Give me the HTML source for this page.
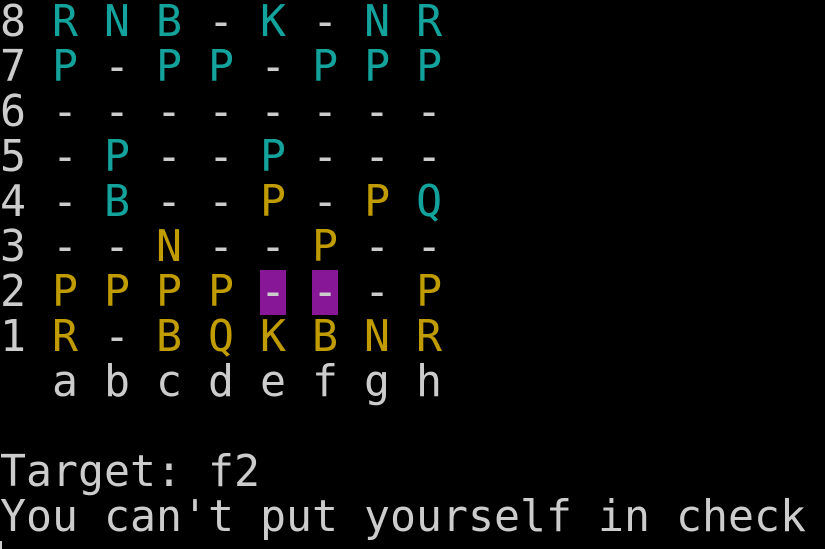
<html><head><style>
body{margin:0;background:#000;width:825px;height:549px;overflow:hidden}
pre{margin:0;font-family:"DejaVu Sans Mono","Liberation Mono",monospace;font-size:43.2px;line-height:45px;color:#cccccc}
.t{color:#13a39c}.y{color:#c19c00}.h{background:#881798;display:inline-block;height:45px;vertical-align:top}
.cur{position:absolute;left:0;top:541px;width:2px;height:8px;background:#ccc}
</style></head><body><pre>8 <span class="t">R N B</span> - <span class="t">K</span> - <span class="t">N R</span>
7 <span class="t">P</span> - <span class="t">P P</span> - <span class="t">P P P</span>
6 - - - - - - - -
5 - <span class="t">P</span> - - <span class="t">P</span> - - -
4 - <span class="t">B</span> - - <span class="y">P</span> - <span class="y">P</span> <span class="t">Q</span>
3 - - <span class="y">N</span> - - <span class="y">P</span> - -
2 <span class="y">P P P P</span> <span class="h">-</span> <span class="h">-</span> - <span class="y">P</span>
1 <span class="y">R</span> - <span class="y">B Q K B N R</span>
  a b c d e f g h

Target: f2
You can't put yourself in check</pre><div class="cur"></div></body></html>
